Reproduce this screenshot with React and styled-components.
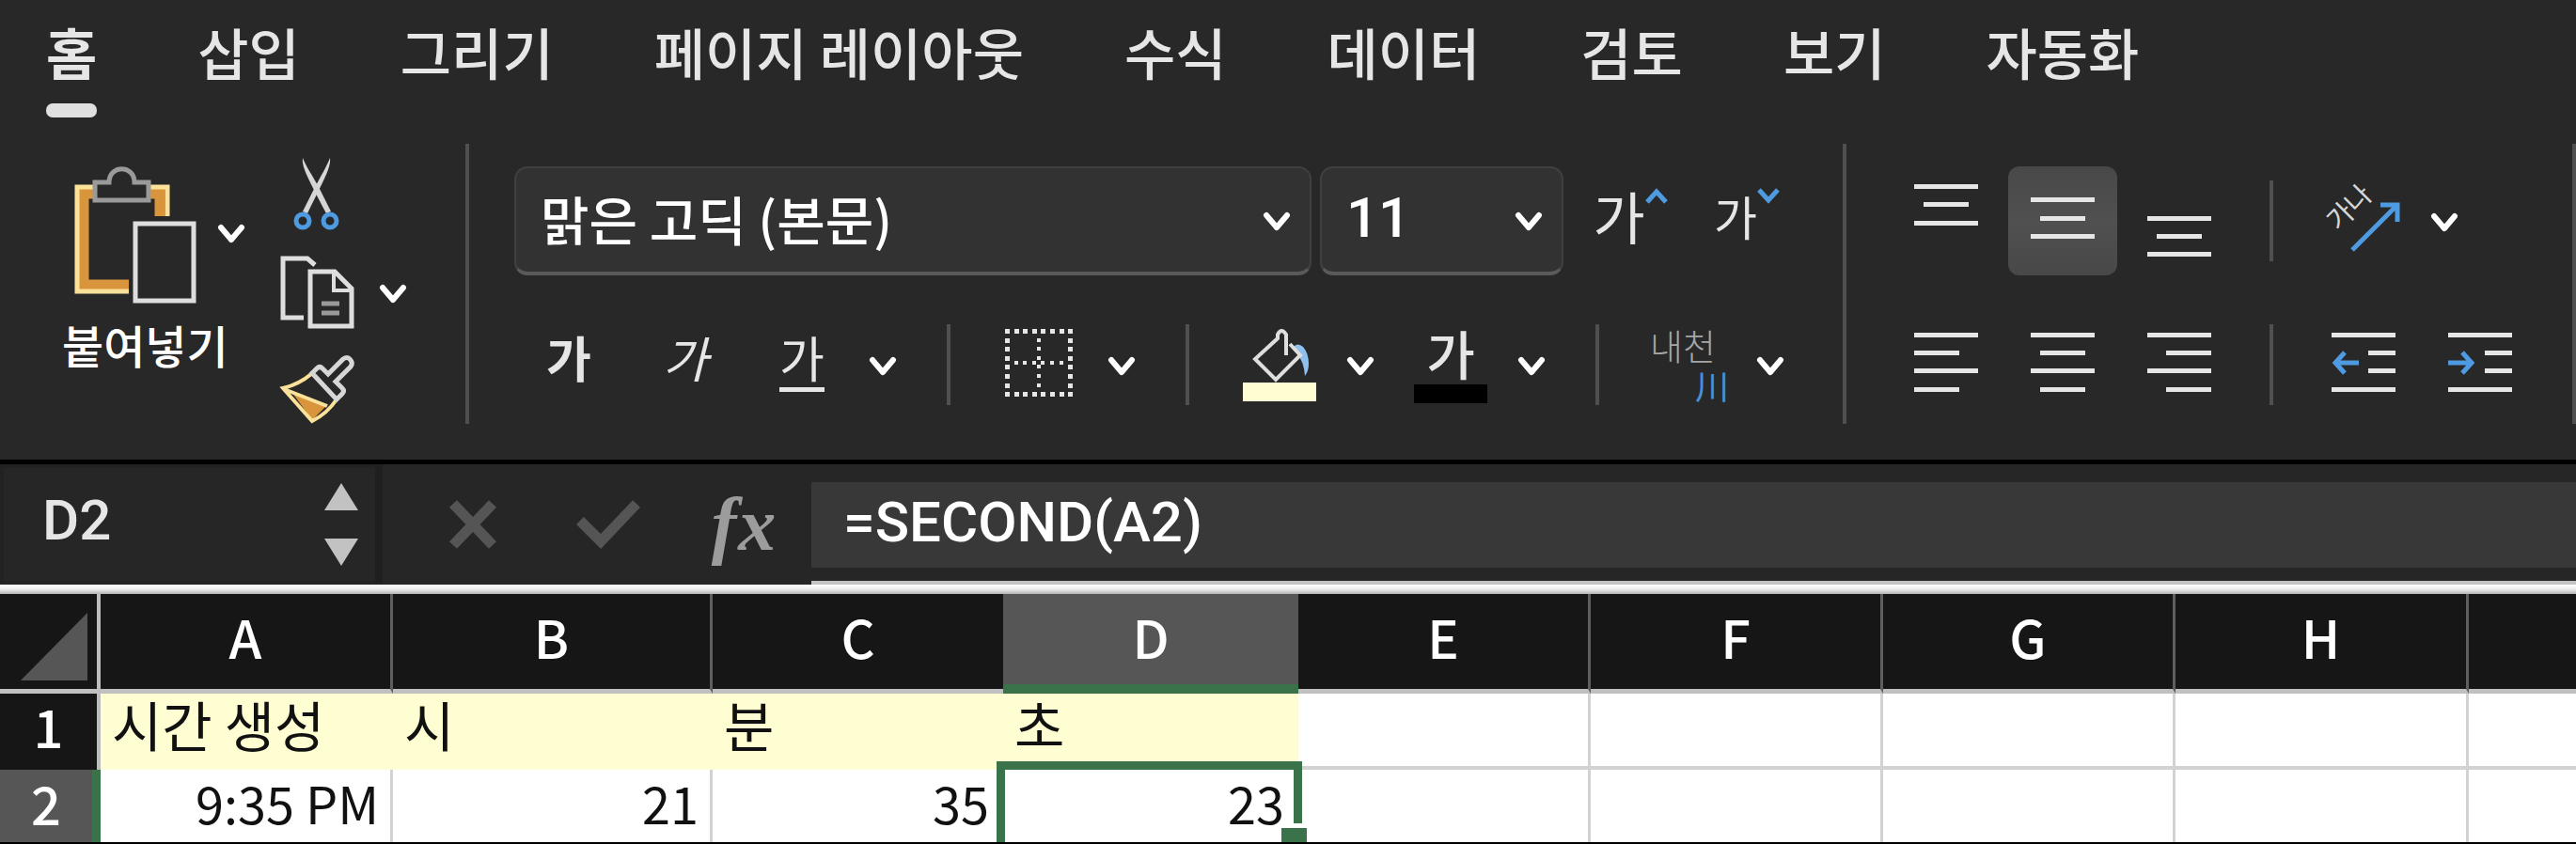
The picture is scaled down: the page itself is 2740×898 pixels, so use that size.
import React from 'react';
import styled, { createGlobalStyle, css } from 'styled-components';

const GlobalStyle = createGlobalStyle`
  * {
    box-sizing: border-box;
  }

  body {
    margin: 0;
    background: #000;
    color: #e6e6e6;
    font-family: 'Noto Sans CJK KR', 'Noto Sans', sans-serif;
    overflow: hidden;
  }

  button,
  input,
  select {
    background: none;
    border: 0;
    border-radius: 0;
    color: inherit;
    font: inherit;
    margin: 0;
    outline: 0;
    padding: 0;
  }

  svg {
    display: block;
    flex: none;
    overflow: visible;
  }
`;

const Window = styled.main`
  background: #282828;
  overflow: hidden;
`;

// tabs

const TabBar = styled.nav`
  display: flex;
  gap: 107px;
  padding: 23px 49px 0;
`;

const Tab = styled.button`
  font-size: 59px;
  font-weight: ${props => props.$active ? 700 : 500};
  line-height: 64px;
  white-space: nowrap;

  &::after {
    background: ${props => props.$active ? '#e0e0e0' : 'transparent'};
    border-radius: 7px;
    content: '';
    display: block;
    height: 15px;
    margin-top: 23px;
  }
`;

// ribbon

const Ribbon = styled.div`
  display: flex;
  padding: 28px 0 38px;
`;

const Group = styled.section`
  border-right: 4px solid #505050;
  display: flex;
  flex: none;
  height: 298px;
  padding: 0 40px 0 48px;
`;

const ClipboardGroup = styled(Group)`
  gap: 27px;
  padding: 0 53px 0 66px;
`;

const Rows = styled.div`
  display: flex;
  flex-direction: column;
  gap: 37px;
  padding: 24px 0 5px;
`;

const Row = styled.div`
  align-items: center;
  display: flex;
  height: 116px;
`;

const Cluster = styled.div`
  display: flex;
  gap: ${props => props.$gap || 8}px;
`;

const Split = styled.div`
  align-items: center;
  display: flex;
  gap: 4px;
`;

const Rule = styled.div`
  background: #505050;
  height: 86px;
  margin: 0 38px 0 ${props => props.$before || 44}px;
  width: 4px;
`;

const Tool = styled.button`
  align-items: center;
  border-radius: 12px;
  display: flex;
  height: 116px;
  justify-content: center;
  width: 116px;

  ${props => props.$pressed && css`
    background: linear-gradient(#484848, #505050 50%, #484848);
  `}
`;

const DropButton = styled.button`
  align-items: center;
  color: #fff;
  display: flex;
  height: 60px;
  justify-content: center;
  width: 48px;
`;

const Glyph = styled.span`
  border-bottom: 5px solid ${props => props.$underline ? '#e6e6e6' : 'transparent'};
  display: block;
  font-size: 52px;
  font-style: ${props => props.$italic ? 'italic' : 'normal'};
  font-weight: ${props => props.$bold ? 700 : 400};
  line-height: 64px;
  margin-bottom: 12px;
`;

const ColorGlyph = styled.span`
  align-items: center;
  display: flex;
  flex-direction: column;
  font-size: 56px;
  font-weight: 500;
  gap: 7px;
  line-height: 54px;

  &::after {
    background: #000;
    content: '';
    height: 20px;
    width: 78px;
  }
`;

const Phonetic = styled.span`
  color: #a6a6a6;
  display: flex;
  flex-direction: column;
  font-size: 38px;
  font-weight: 300;
  line-height: 42px;
  text-align: left;
  width: 84px;

  b {
    color: #4a90d4;
    font-size: 36px;
    font-weight: 400;
    text-align: right;
  }
`;

const SizeTool = styled.button`
  align-items: flex-start;
  display: flex;
  font-size: ${props => props.$size}px;
  height: 58px;
  justify-content: center;
  line-height: 56px;
  margin-bottom: 14px;
  width: 124px;

  span {
    align-self: flex-end;
  }
`;

const Picker = styled.div`
  align-items: center;
  background: #323232;
  border: 2px solid #404040;
  border-bottom: 4px solid #5a5a5a;
  border-radius: 14px;
  color: #fff;
  display: grid;
  height: 116px;
  margin-right: 9px;
  width: ${props => props.$wide ? 848 : 259}px;

  select {
    appearance: none;
    font: ${props => props.$wide ? '500 56px "Noto Sans CJK KR", sans-serif' : '500 60px Roboto, sans-serif'};
    grid-area: 1 / 1;
    height: 100%;
    padding: 0 60px 6px 26px;
    width: 100%;
  }

  svg {
    grid-area: 1 / 1;
    justify-self: end;
    margin-right: 20px;
    pointer-events: none;
  }
`;

const PasteBox = styled.div`
  color: #fff;
  padding-top: 24px;
`;

const PasteTop = styled.div`
  display: flex;
`;

const PasteButton = styled.button`
  display: flex;
  justify-content: center;
  width: 156px;
`;

const PasteDrop = styled(DropButton)`
  height: 140px;
`;

const PasteLabel = styled.button`
  display: block;
  font-size: 48px;
  font-weight: 500;
  line-height: 56px;
  margin-top: 15px;
`;

const ClipList = styled.div`
  display: flex;
  flex-direction: column;
  gap: 24px;
  padding-top: 14px;
`;

const ClipRow = styled.div`
  align-items: center;
  display: flex;
  gap: 17px;
`;

// formula bar

const FormulaBar = styled.div`
  background: #262626;
  border-top: 5px solid #000;
  display: flex;
  height: 133px;
`;

const NameBox = styled.div`
  align-items: center;
  border: 4px solid #222;
  border-right: 8px solid #1f1f1f;
  display: flex;
  flex: none;
  width: 407px;

  input {
    flex: 1;
    font: 500 60px Roboto, sans-serif;
    min-width: 0;
    padding: 0 0 10px 41px;
  }
`;

const Stepper = styled.button`
  padding-right: 18px;
`;

const FormulaActions = styled.div`
  display: flex;
  flex: none;
  padding-left: 24px;

  button {
    align-items: center;
    display: flex;
    justify-content: center;
    width: 144px;
  }
`;

const FxButton = styled.button`
  color: #9c9c9c;
  font-family: 'Liberation Serif', serif;
  font-size: 80px;
  font-style: italic;
  font-weight: 700;
  gap: 2px;
  line-height: 84px;
`;

const FormulaField = styled.div`
  border-bottom: 4px solid #c4c4c4;
  flex: 1;
  padding: 19px 0 14px;

  input {
    background: #383838;
    color: #fff;
    font: 500 60px Roboto, sans-serif;
    height: 100%;
    padding: 0 0 6px 34px;
    width: 100%;
  }
`;

// sheet

const SheetEdge = styled.div`
  background: linear-gradient(#fff, #ececec 50%, #b4b4b4);
  height: 10px;
`;

const Sheet = styled.table`
  background: #fff;
  border-bottom: 2px solid #000;
  border-collapse: separate;
  border-spacing: 0;
  color: #111;
  line-height: 60px;
  table-layout: fixed;
  width: 100%;
`;

const ColumnHead = styled.th`
  background: ${props => props.$active ? '#565656' : '#161616'};
  border-bottom: ${props => props.$active ? '10px solid #3a7349' : '5px solid #c0c0c0'};
  border-right: ${props => props.$noLine ? '0' : '3px solid #5f5f5f'};
  color: #fff;
  font-size: 56px;
  font-weight: 500;
  height: 106px;
  padding: ${props => props.$active ? '0 0 7px' : '0 0 12px'};
`;

const Corner = styled(ColumnHead)`
  border-right: 4px solid #bdbdbd;
  padding: 10px 0 0 12px;
`;

const RowHead = styled.th`
  background: ${props => props.$active ? '#565656' : '#161616'};
  border-right: ${props => props.$active ? '9px solid #3a7349' : '4px solid #bdbdbd'};
  color: #fff;
  font-size: 56px;
  font-weight: 500;
  padding: 0 0 ${props => props.$active ? 8 : 14}px;
`;

const Cell = styled.td`
  background: ${props => props.$filled ? '#fffdd2' : '#fff'};
  border-bottom: ${props => props.$last ? '0' : '4px'} solid ${props => props.$filled ? '#fffdd2' : '#d2d2d2'};
  border-right: 3px solid ${props => props.$filled ? '#fffdd2' : '#d2d2d2'};
  font-size: ${props => props.$last ? 54 : 58}px;
  height: ${props => props.$last ? 77 : 81}px;
  padding: 0 12px ${props => props.$last ? 8 : 14}px;
  position: relative;
  text-align: ${props => props.$last ? 'right' : 'left'};
  white-space: nowrap;

  &:last-child {
    border-right: 0;
  }
`;

const Selection = styled.div`
  border: 9px solid #3a7349;
  border-bottom: 0;
  height: 86px;
  left: -7px;
  position: absolute;
  right: -7px;
  top: -9px;
  z-index: 1;

  &::after {
    background: #3a7349;
    border: solid #fff;
    border-width: 5px 0 0 3px;
    bottom: 0;
    content: '';
    height: 15px;
    position: absolute;
    right: -14px;
    width: 27px;
  }
`;

const tabs = ['홈', '삽입', '그리기', '페이지 레이아웃', '수식', '데이터', '검토', '보기', '자동화'];

const columns = [
  { name: 'A', width: 311 },
  { name: 'B', width: 340 },
  { name: 'C', width: 309 },
  { name: 'D', width: 314 },
  { name: 'E', width: 311 },
  { name: 'F', width: 311 },
  { name: 'G', width: 311 },
  { name: 'H', width: 312 },
  { name: '' }
];

const rows = [
  ['시간 생성', '시', '분', '초', '', '', '', '', ''],
  ['9:35 PM', '21', '35', '23', '', '', '', '', '']
];

// each line is [x, y, width]
const lines = {
  top: [[0, 1, 68], [10, 20, 48], [0, 40, 68]],
  middle: [[0, 15, 68], [10, 35, 48], [0, 54, 68]],
  bottom: [[0, 35, 68], [10, 54, 48], [0, 73, 68]],
  left: [[0, 6, 68], [0, 25, 48], [0, 44, 68], [0, 64, 48]],
  center: [[0, 6, 68], [10, 25, 48], [0, 44, 68], [10, 64, 48]],
  right: [[0, 6, 68], [20, 25, 48], [0, 44, 68], [20, 64, 48]],
  indent: [[0, 6, 68], [39, 25, 29], [39, 44, 29], [0, 64, 68]]
};

const LinesIcon = ({ kind, children }) => (
  <svg width="68" height="80" fill="#e6e6e6">
    { lines[kind].map(([x, y, width]) => <rect key={ y } x={ x } y={ y } width={ width } height="5"/>) }
    { children }
  </svg>
);

const Chevron = () => (
  <svg width="30" height="24" fill="none" stroke="currentColor" strokeWidth="6" strokeLinecap="round" strokeLinejoin="round">
    <path d="M4 7 L15 20 L26 7"/>
  </svg>
);

const Caret = ({ up }) => (
  <svg width="24" height="18" fill="none" stroke="#4f9be2" strokeWidth="5">
    <path d={ up ? 'M2 16 L12 5 L22 16' : 'M2 3 L12 14 L22 3' }/>
  </svg>
);

const PasteIcon = () => (
  <svg width="130" height="146" fill="none">
    <path d="M20 29 H10 V126 H58 M80 29 H91 V53" stroke="#d9953c" strokeWidth="11"/>
    <path d="M20 22 H3 V133 H58 M80 22 H99 V53" stroke="#fbe19a" strokeWidth="5"/>
    <path d="M22 17 H37 C37 -2 64 -2 64 17 H79 V36 H22 Z" fill="#282828" stroke="#9a9a9a" strokeWidth="5"/>
    <rect x="65" y="61" width="62" height="82" stroke="#dedede" strokeWidth="5"/>
  </svg>
);

const CutIcon = () => (
  <svg width="80" height="80" fill="none">
    <path d="M25 1 C24 10 28 18 50 60 L55 58 L43 34 C35 19 29 11 25 1 Z" fill="#d6d6d6"/>
    <path d="M54 1 C55 10 51 18 30 60 L25 58 L37 34 C45 19 50 11 54 1 Z" fill="#d6d6d6"/>
    <g stroke="#4f9be2" strokeWidth="5">
      <circle cx="25" cy="68" r="7"/>
      <circle cx="54" cy="68" r="7"/>
    </g>
  </svg>
);

const CopyIcon = () => (
  <svg width="80" height="80" fill="none" stroke="#dedede" strokeWidth="5">
    <path d="M38 11 L30 4 H4 V67 H26"/>
    <path d="M33 18 H59 L77 36 V76 H33 Z"/>
    <path d="M58 19 V38 H76" strokeWidth="4"/>
    <path d="M45 52 H64 M45 62 H64" stroke="#9a9a9a"/>
  </svg>
);

const BrushIcon = () => (
  <svg width="80" height="80" fill="none" strokeWidth="5">
    <path d="M14 43 L50 57 L35 72 Z" fill="#d9953c"/>
    <path d="M34 23 Q21 34 4 38 L35 73 Q51 65 61 50 M5 39 L51 57" stroke="#fbe19a" strokeWidth="4"/>
    <path d="M35 22 L40 17 Q43 14 46 17 L52 23 L68 7 Q72 4 75 7 Q79 11 76 15 L60 31 L67 38 Q70 41 67 44 L61 50 Z" stroke="#d6d6d6"/>
  </svg>
);

const steps = [0, 1, 2, 3, 4, 5, 6, 7];

const BordersIcon = () => (
  <svg width="78" height="78" fill="#e6e6e6">
    { steps.map(i => {
      const at = Math.round(i * 9.6) + 1;
      const inner = i > 0 && i < 7;
      return (
        <g key={ i }>
          <rect x={ at } y="1" width="5" height="5"/>
          <rect x={ at } y="68" width="5" height="5"/>
          <rect x="1" y={ at } width="5" height="5"/>
          <rect x="68" y={ at } width="5" height="5"/>
          { inner && <rect x={ at } y="35" width="4" height="4"/> }
          { inner && <rect x="35" y={ at } width="4" height="4"/> }
        </g>
      );
    }) }
  </svg>
);

const FillIcon = () => (
  <svg width="78" height="78" fill="none">
    <path d="M54 20 Q58 15 64 20 Q70 27 70 38 Q70 46 66 51 Q65 36 58 28 Z" fill="#8fc1ee"/>
    <path d="M50 17 L61 29 L35 55 L13 33 L37 11 V7 Q41 -1 46 7 V29" stroke="#dedede" strokeWidth="4"/>
    <rect y="58" width="78" height="20" fill="#fffdd2"/>
  </svg>
);

const OrientationIcon = () => (
  <svg width="80" height="80" fill="none">
    <text x="25" y="36" transform="rotate(-45 25 26)" textAnchor="middle" fontSize="29" fill="#d6d6d6">가나</text>
    <path d="M28 71 L76 23 M58 23 H76 V41" stroke="#4f9be2" strokeWidth="5"/>
  </svg>
);

const Drop = ({ label }) => (
  <DropButton aria-label={ label }><Chevron/></DropButton>
);

const Clipboard = () => (
  <ClipboardGroup>
    <PasteBox>
      <PasteTop>
        <PasteButton aria-label="붙여넣기"><PasteIcon/></PasteButton>
        <PasteDrop aria-label="붙여넣기 옵션"><Chevron/></PasteDrop>
      </PasteTop>
      <PasteLabel>붙여넣기</PasteLabel>
    </PasteBox>
    <ClipList>
      <ClipRow><button aria-label="잘라내기"><CutIcon/></button></ClipRow>
      <ClipRow>
        <button aria-label="복사"><CopyIcon/></button>
        <Drop label="복사 옵션"/>
      </ClipRow>
      <ClipRow><button aria-label="서식 복사"><BrushIcon/></button></ClipRow>
    </ClipList>
  </ClipboardGroup>
);

const Font = () => (
  <Group>
    <Rows>
      <Row>
        <Picker $wide>
          <select aria-label="글꼴"><option>맑은 고딕 (본문)</option></select>
          <Chevron/>
        </Picker>
        <Picker>
          <select aria-label="글꼴 크기"><option>11</option></select>
          <Chevron/>
        </Picker>
        <SizeTool $size={ 60 } aria-label="글꼴 크게"><span>가</span><Caret up/></SizeTool>
        <SizeTool $size={ 50 } aria-label="글꼴 작게"><span>가</span><Caret/></SizeTool>
      </Row>
      <Row>
        <Cluster>
          <Tool aria-label="굵게"><Glyph $bold>가</Glyph></Tool>
          <Tool aria-label="기울임꼴"><Glyph $italic>가</Glyph></Tool>
          <Split>
            <Tool aria-label="밑줄"><Glyph $underline>가</Glyph></Tool>
            <Drop label="밑줄 옵션"/>
          </Split>
        </Cluster>
        <Rule/>
        <Split>
          <Tool aria-label="테두리"><BordersIcon/></Tool>
          <Drop label="테두리 옵션"/>
        </Split>
        <Rule/>
        <Cluster $gap={ 14 }>
          <Split>
            <Tool aria-label="채우기 색"><FillIcon/></Tool>
            <Drop label="채우기 색 옵션"/>
          </Split>
          <Split>
            <Tool aria-label="글꼴 색"><ColorGlyph>가</ColorGlyph></Tool>
            <Drop label="글꼴 색 옵션"/>
          </Split>
        </Cluster>
        <Rule/>
        <Split>
          <Tool aria-label="윗주"><Phonetic>내천<b>川</b></Phonetic></Tool>
          <Drop label="윗주 옵션"/>
        </Split>
      </Row>
    </Rows>
  </Group>
);

const Alignment = () => (
  <Group>
    <Rows>
      <Row>
        <Cluster>
          <Tool aria-label="위쪽 맞춤"><LinesIcon kind="top"/></Tool>
          <Tool aria-label="가운데 맞춤" aria-pressed="true" $pressed><LinesIcon kind="middle"/></Tool>
          <Tool aria-label="아래쪽 맞춤"><LinesIcon kind="bottom"/></Tool>
        </Cluster>
        <Rule $before={ 38 }/>
        <Split>
          <Tool aria-label="방향"><OrientationIcon/></Tool>
          <Drop label="방향 옵션"/>
        </Split>
      </Row>
      <Row>
        <Cluster>
          <Tool aria-label="왼쪽 맞춤"><LinesIcon kind="left"/></Tool>
          <Tool aria-label="가로 가운데 맞춤"><LinesIcon kind="center"/></Tool>
          <Tool aria-label="오른쪽 맞춤"><LinesIcon kind="right"/></Tool>
        </Cluster>
        <Rule $before={ 38 }/>
        <Cluster>
          <Tool aria-label="내어쓰기">
            <LinesIcon kind="indent">
              <path d="M29 38 H4 M14 27 L4 38 L14 49" fill="none" stroke="#4f9be2" strokeWidth="5"/>
            </LinesIcon>
          </Tool>
          <Tool aria-label="들여쓰기">
            <LinesIcon kind="indent">
              <path d="M0 38 H25 M15 27 L25 38 L15 49" fill="none" stroke="#4f9be2" strokeWidth="5"/>
            </LinesIcon>
          </Tool>
        </Cluster>
      </Row>
    </Rows>
  </Group>
);

export default class App extends React.Component {

  render() {
    return (
      <Window>
        <GlobalStyle/>
        <TabBar>
          { tabs.map((tab, index) => <Tab key={ tab } $active={ index === 0 }>{ tab }</Tab>) }
        </TabBar>
        <Ribbon>
          <Clipboard/>
          <Font/>
          <Alignment/>
        </Ribbon>
        { this.renderFormulaBar() }
        <SheetEdge/>
        { this.renderSheet() }
      </Window>
    );
  }

  renderFormulaBar() {
    return (
      <FormulaBar>
        <NameBox>
          <input aria-label="이름 상자" defaultValue="D2"/>
          <Stepper aria-label="이름 선택">
            <svg width="36" height="88" fill="#c2c2c2">
              <path d="M18 0 L36 29 H0 Z M18 88 L36 59 H0 Z"/>
            </svg>
          </Stepper>
        </NameBox>
        <FormulaActions>
          <button aria-label="취소">
            <svg width="50" height="52" stroke="#555" strokeWidth="11">
              <path d="M4 4 L46 48 M46 4 L4 48"/>
            </svg>
          </button>
          <button aria-label="입력">
            <svg width="68" height="52" fill="none" stroke="#555" strokeWidth="11">
              <path d="M4 22 L26 44 L64 4"/>
            </svg>
          </button>
          <FxButton aria-label="함수 삽입"><span>f</span><span>x</span></FxButton>
        </FormulaActions>
        <FormulaField>
          <input aria-label="수식 입력줄" defaultValue="=SECOND(A2)"/>
        </FormulaField>
      </FormulaBar>
    );
  }

  renderSheet() {
    return (
      <Sheet>
        <colgroup>
          <col width="107"/>
          { columns.map(({ name, width }) => <col key={ name } width={ width }/>) }
        </colgroup>
        <thead>
          <tr>
            <Corner>
              <svg width="82" height="72" fill="#565656"><path d="M81 0 V72 H10 Z"/></svg>
            </Corner>
            { columns.map(({ name }) => (
              <ColumnHead key={ name } $active={ name === 'D' } $noLine={ ['C', 'D', ''].includes(name) }>{ name }</ColumnHead>
            )) }
          </tr>
        </thead>
        <tbody>
          { rows.map((row, index) => this.renderRow(row, index)) }
        </tbody>
      </Sheet>
    );
  }

  renderRow(row, index) {
    const last = index === rows.length - 1;
    return (
      <tr key={ index }>
        <RowHead $active={ last }>{ index + 1 }</RowHead>
        { row.map((value, column) => (
          <Cell key={ column } $last={ last } $filled={ !last && column < 4 }>
            { value }
            { last && column === 3 && <Selection/> }
          </Cell>
        )) }
      </tr>
    );
  }
}
